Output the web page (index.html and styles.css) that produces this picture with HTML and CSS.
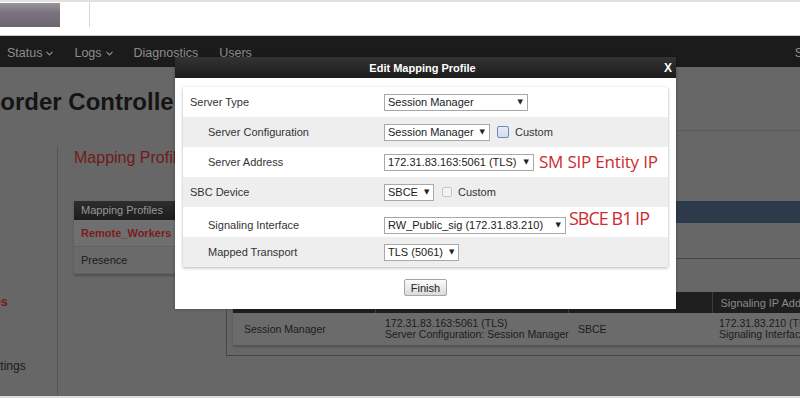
FILE: index.html
```html
<!DOCTYPE html>
<html lang="en">
<head>
    <meta charset="UTF-8">
    <meta name="viewport" content="width=device-width, initial-scale=1.0">
    <title>Edit Mapping Profile</title>
    <link rel="stylesheet" href="styles.css">
</head>
<body>
<div class="page">
    <header class="top">
        <div class="logo"></div>
        <div class="top-divider"></div>
    </header>

    <nav class="menu">
        <span class="menu-item">Status <svg class="chev" width="7" height="5" viewBox="0 0 7 5"><polyline points="0.5,0.8 3.5,3.8 6.5,0.8"/></svg></span>
        <span class="menu-item">Logs <svg class="chev" width="7" height="5" viewBox="0 0 7 5"><polyline points="0.5,0.8 3.5,3.8 6.5,0.8"/></svg></span>
        <span class="menu-item">Diagnostics</span>
        <span class="menu-item">Users</span>
        <span class="menu-item menu-right">Settings</span>
    </nav>

    <h1 class="app-title">Border Controller for Enterprise</h1>

    <div class="main">
        <aside class="side">
            <ul class="side-list">
                <li>Overview</li>
                <li>Devices</li>
                <li>Licensing</li>
                <li>Alarms</li>
                <li class="current">Mapping Profiles</li>
                <li>Relays</li>
                <li>Domain DoS Settings</li>
            </ul>
        </aside>

        <section class="content">
            <div class="profiles">
                <h2 class="page-title">Mapping Profiles</h2>
                <div class="list">
                    <div class="list-head">Mapping Profiles</div>
                    <div class="list-row active">Remote_Workers</div>
                    <div class="list-row">Presence</div>
                </div>
            </div>

            <div class="detail">
                <div class="detail-bar"></div>
                <div class="detail-box">
                    <table class="map-table">
                        <colgroup>
                            <col class="c1"><col class="c2"><col class="c3"><col class="c4">
                        </colgroup>
                        <thead>
                            <tr><th>Server Type</th><th>Server Address</th><th>SBC Device</th><th>Signaling IP Address</th></tr>
                        </thead>
                        <tbody>
                            <tr>
                                <td>Session Manager</td>
                                <td>172.31.83.163:5061 (TLS)<br>Server Configuration: Session Manager</td>
                                <td>SBCE</td>
                                <td>172.31.83.210 (TLS)<br>Signaling Interface: RW_Public_sig</td>
                            </tr>
                        </tbody>
                    </table>
                </div>
            </div>
        </section>
    </div>

    <div class="foot"></div>
</div>

<div class="modal">
    <div class="modal-title">
        <span></span>
        <span class="modal-heading">Edit Mapping Profile</span>
        <span class="modal-close">X</span>
    </div>
    <div class="modal-body">
        <div class="form-panel">
            <div class="form-row">
                <span class="label">Server Type</span>
                <div class="field"><span class="select w-type">Session Manager <i class="caret">▼</i></span></div>
            </div>
            <div class="form-row">
                <span class="label sub">Server Configuration</span>
                <div class="field">
                    <span class="select w-config">Session Manager <i class="caret">▼</i></span>
                    <input type="checkbox" class="check check-focus">
                    <span class="check-label">Custom</span>
                </div>
            </div>
            <div class="form-row">
                <span class="label sub">Server Address</span>
                <div class="field">
                    <span class="select w-addr">172.31.83.163:5061 (TLS) <i class="caret">▼</i></span>
                    <span class="note">SM SIP Entity IP</span>
                </div>
            </div>
            <div class="form-row">
                <span class="label">SBC Device</span>
                <div class="field">
                    <span class="select w-sbc">SBCE <i class="caret">▼</i></span>
                    <input type="checkbox" class="check check-off" disabled>
                    <span class="check-label">Custom</span>
                </div>
            </div>
            <div class="form-row">
                <span class="label sub">Signaling Interface</span>
                <div class="field">
                    <span class="select w-sig">RW_Public_sig (172.31.83.210) <i class="caret">▼</i></span>
                    <span class="note note-up">SBCE B1 IP</span>
                </div>
            </div>
            <div class="form-row">
                <span class="label sub">Mapped Transport</span>
                <div class="field"><span class="select w-tls">TLS (5061) <i class="caret">▼</i></span></div>
            </div>
        </div>
        <div class="modal-actions">
            <button class="btn">Finish</button>
        </div>
    </div>
</div>
</body>
</html>
```

FILE: styles.css
```css
* {
    box-sizing: border-box;
}

html, body {
    margin: 0;
    padding: 0;
}

body {
    width: 800px;
    height: 398px;
    overflow: hidden;
    position: relative;
    background: #676767;
    font-family: "Liberation Sans", Arial, sans-serif;
    font-size: 11px;
    color: #1d1d1d;
}

.page {
    width: 800px;
    height: 398px;
    overflow: hidden;
    display: flex;
    flex-direction: column;
}

/* header strip */
.top {
    height: 36px;
    flex: none;
    display: flex;
    align-items: flex-start;
    background: #fff;
    border-top: 2px solid #e1e1e1;
    border-bottom: 1px solid #c9c9c9;
}

.logo {
    width: 60px;
    height: 24px;
    margin-top: 1px;
    background: linear-gradient(#9a949d, #7a737d 40%, #6c6670);
}

.top-divider {
    width: 1px;
    height: 25px;
    margin-left: 29px;
    background: #d8d8d8;
}

/* menu bar */
.menu {
    height: 31px;
    flex: none;
    display: flex;
    align-items: center;
    gap: 21px;
    padding: 2px 0 0 7px;
    background: #1b1b1b;
    color: #8d8d8d;
    font-size: 12.5px;
    white-space: nowrap;
}

.menu-item {
    display: flex;
    align-items: center;
    gap: 4px;
}

.chev {
    fill: none;
    stroke: #8d8d8d;
    stroke-width: 1.2;
    margin-top: 1px;
}

.menu-right {
    margin-left: auto;
    margin-right: -40px;
}

.app-title {
    flex: none;
    height: 63px;
    margin: 0 0 0 -17px;
    padding-top: 21px;
    font-size: 24px;
    line-height: 28px;
    font-weight: bold;
    color: #141414;
    white-space: nowrap;
}

.main {
    flex: 1;
    display: flex;
    min-height: 0;
}

/* left navigation */
.side {
    width: 58px;
    flex: none;
    margin-top: 17px;
    border-right: 1px solid #545454;
    overflow: hidden;
}

.side-list {
    list-style: none;
    margin: 0 0 0 -89px;
    padding: 11px 0 0;
    font-size: 12px;
    color: #1a1a1a;
    white-space: nowrap;
}

.side-list li {
    height: 32px;
    line-height: 32px;
}

.side-list .current {
    color: #7a1616;
    font-weight: bold;
}

/* content */
.content {
    flex: 1;
    display: flex;
    gap: 7px;
    padding-left: 16px;
    min-width: 0;
}

.profiles {
    width: 145px;
    flex: none;
}

.page-title {
    margin: 18px 0 0;
    font-size: 16px;
    line-height: 20px;
    font-weight: normal;
    color: #6f1b1b;
    white-space: nowrap;
}

.list {
    margin-top: 33px;
    width: 160px;
    box-shadow: 0 2px 2px rgba(0, 0, 0, 0.22);
}

.list-head {
    height: 19px;
    line-height: 19px;
    padding-left: 7px;
    background: linear-gradient(#2e2e2e, #1c1c1c);
    color: #979797;
}

.list-row {
    height: 27px;
    line-height: 27px;
    padding-left: 7px;
    background: #6a6a6a;
    border-bottom: 1px solid #626262;
    color: #1c1c1c;
}

.list-row.active {
    background: #6f6f6f;
    color: #7b1c1c;
    font-weight: bold;
}

.detail {
    width: 640px;
    flex: none;
    border-top: 1px solid #5c5c5c;
}

.detail-bar {
    height: 22px;
    margin-top: 70px;
    background: #2d3a4b;
}

.detail-box {
    margin-top: 35px;
    padding: 33px 0 10px 6px;
    border: 1px solid #464646;
    border-right: none;
}

.map-table {
    table-layout: fixed;
    width: 630px;
    border-collapse: collapse;
    box-shadow: 0 2px 2px rgba(0, 0, 0, 0.22);
}

.c1 { width: 142px; }
.c2 { width: 193px; }
.c3 { width: 144px; }
.c4 { width: 151px; }

.map-table th {
    height: 21px;
    padding: 0 0 0 8px;
    background: #1e1e1e;
    border-left: 1px solid #3c3c3c;
    color: #8a8a8a;
    font-weight: normal;
    font-size: 11px;
    text-align: left;
    white-space: nowrap;
}

.map-table th:first-child {
    border-left: none;
}

.map-table td {
    height: 32px;
    padding: 0 0 0 10px;
    background: #6b6b6b;
    font-size: 10.5px;
    line-height: 11px;
    color: #1c1c1c;
    white-space: nowrap;
    vertical-align: middle;
}

.map-table td:first-child {
    padding-left: 11px;
}

.map-table td:last-child {
    padding-left: 7px;
}

.foot {
    height: 2px;
    flex: none;
    background: #dcdcdc;
}

/* modal dialog */
.modal {
    position: absolute;
    left: 175px;
    top: 57px;
    width: 501px;
    height: 252px;
    background: #fff;
    box-shadow: 0 0 3px rgba(0, 0, 0, 0.3);
}

.modal-title {
    height: 21px;
    display: grid;
    grid-template-columns: 1fr auto 1fr;
    align-items: center;
    background: linear-gradient(#333, #1c1c1c);
    color: #fff;
    font-weight: bold;
    font-size: 11px;
}

.modal-heading {
    margin-right: 6px;
}

.modal-close {
    justify-self: end;
    padding-right: 4px;
    font-size: 12px;
}

.modal-body {
    padding: 9px 8px 0;
}

.form-panel {
    box-shadow: 0 1px 3px rgba(0, 0, 0, 0.3);
}

.form-row {
    height: 30px;
    display: grid;
    grid-template-columns: 201px 1fr;
    align-items: center;
    color: #333;
}

.form-row:nth-child(even) {
    background: #eee;
}

.label {
    padding-left: 7px;
}

.label.sub {
    padding-left: 25px;
}

.field {
    display: flex;
    align-items: center;
    white-space: nowrap;
}

.select {
    height: 17px;
    display: inline-flex;
    justify-content: space-between;
    align-items: center;
    padding: 0 4px 0 3px;
    border: 1px solid #a8a8a8;
    background: #fff;
    color: #222;
}

.caret {
    font-style: normal;
    font-size: 7px;
    font-family: "DejaVu Sans", sans-serif;
    margin-left: 6px;
}

.w-type { width: 144px; }
.w-config { width: 106px; }
.w-addr { width: 150px; }
.w-sbc { width: 50px; }
.w-sig { width: 182px; }
.w-tls { width: 75px; }

.check {
    appearance: none;
    margin: 0 6px 0 7px;
    border-radius: 2px;
}

.check-focus {
    width: 12px;
    height: 12px;
    border: 1px solid #6a8ac4;
    background: linear-gradient(#e6ecf5, #d3dcea);
}

.check-off {
    width: 10px;
    height: 10px;
    margin-left: 8px;
    border: 1px solid #c6c6c6;
    background: #f3f3f3;
}

.check-label {
    color: #333;
}

.note {
    margin-left: 5px;
    font-family: "Open Sans", sans-serif;
    font-size: 17px;
    letter-spacing: -0.2px;
    line-height: 22px;
    color: #cf2a30;
}

.note-up {
    margin-left: 3px;
    margin-bottom: 14px;
    font-size: 18px;
    letter-spacing: -1px;
}

.modal-actions {
    margin-top: 12px;
    text-align: center;
}

.btn {
    width: 43px;
    height: 17px;
    padding: 0;
    border: 1px solid #a5a5a5;
    border-radius: 2px;
    background: linear-gradient(#fbfbfb, #dadada);
    font-family: "Liberation Sans", Arial, sans-serif;
    font-size: 11px;
    color: #222;
}
```
